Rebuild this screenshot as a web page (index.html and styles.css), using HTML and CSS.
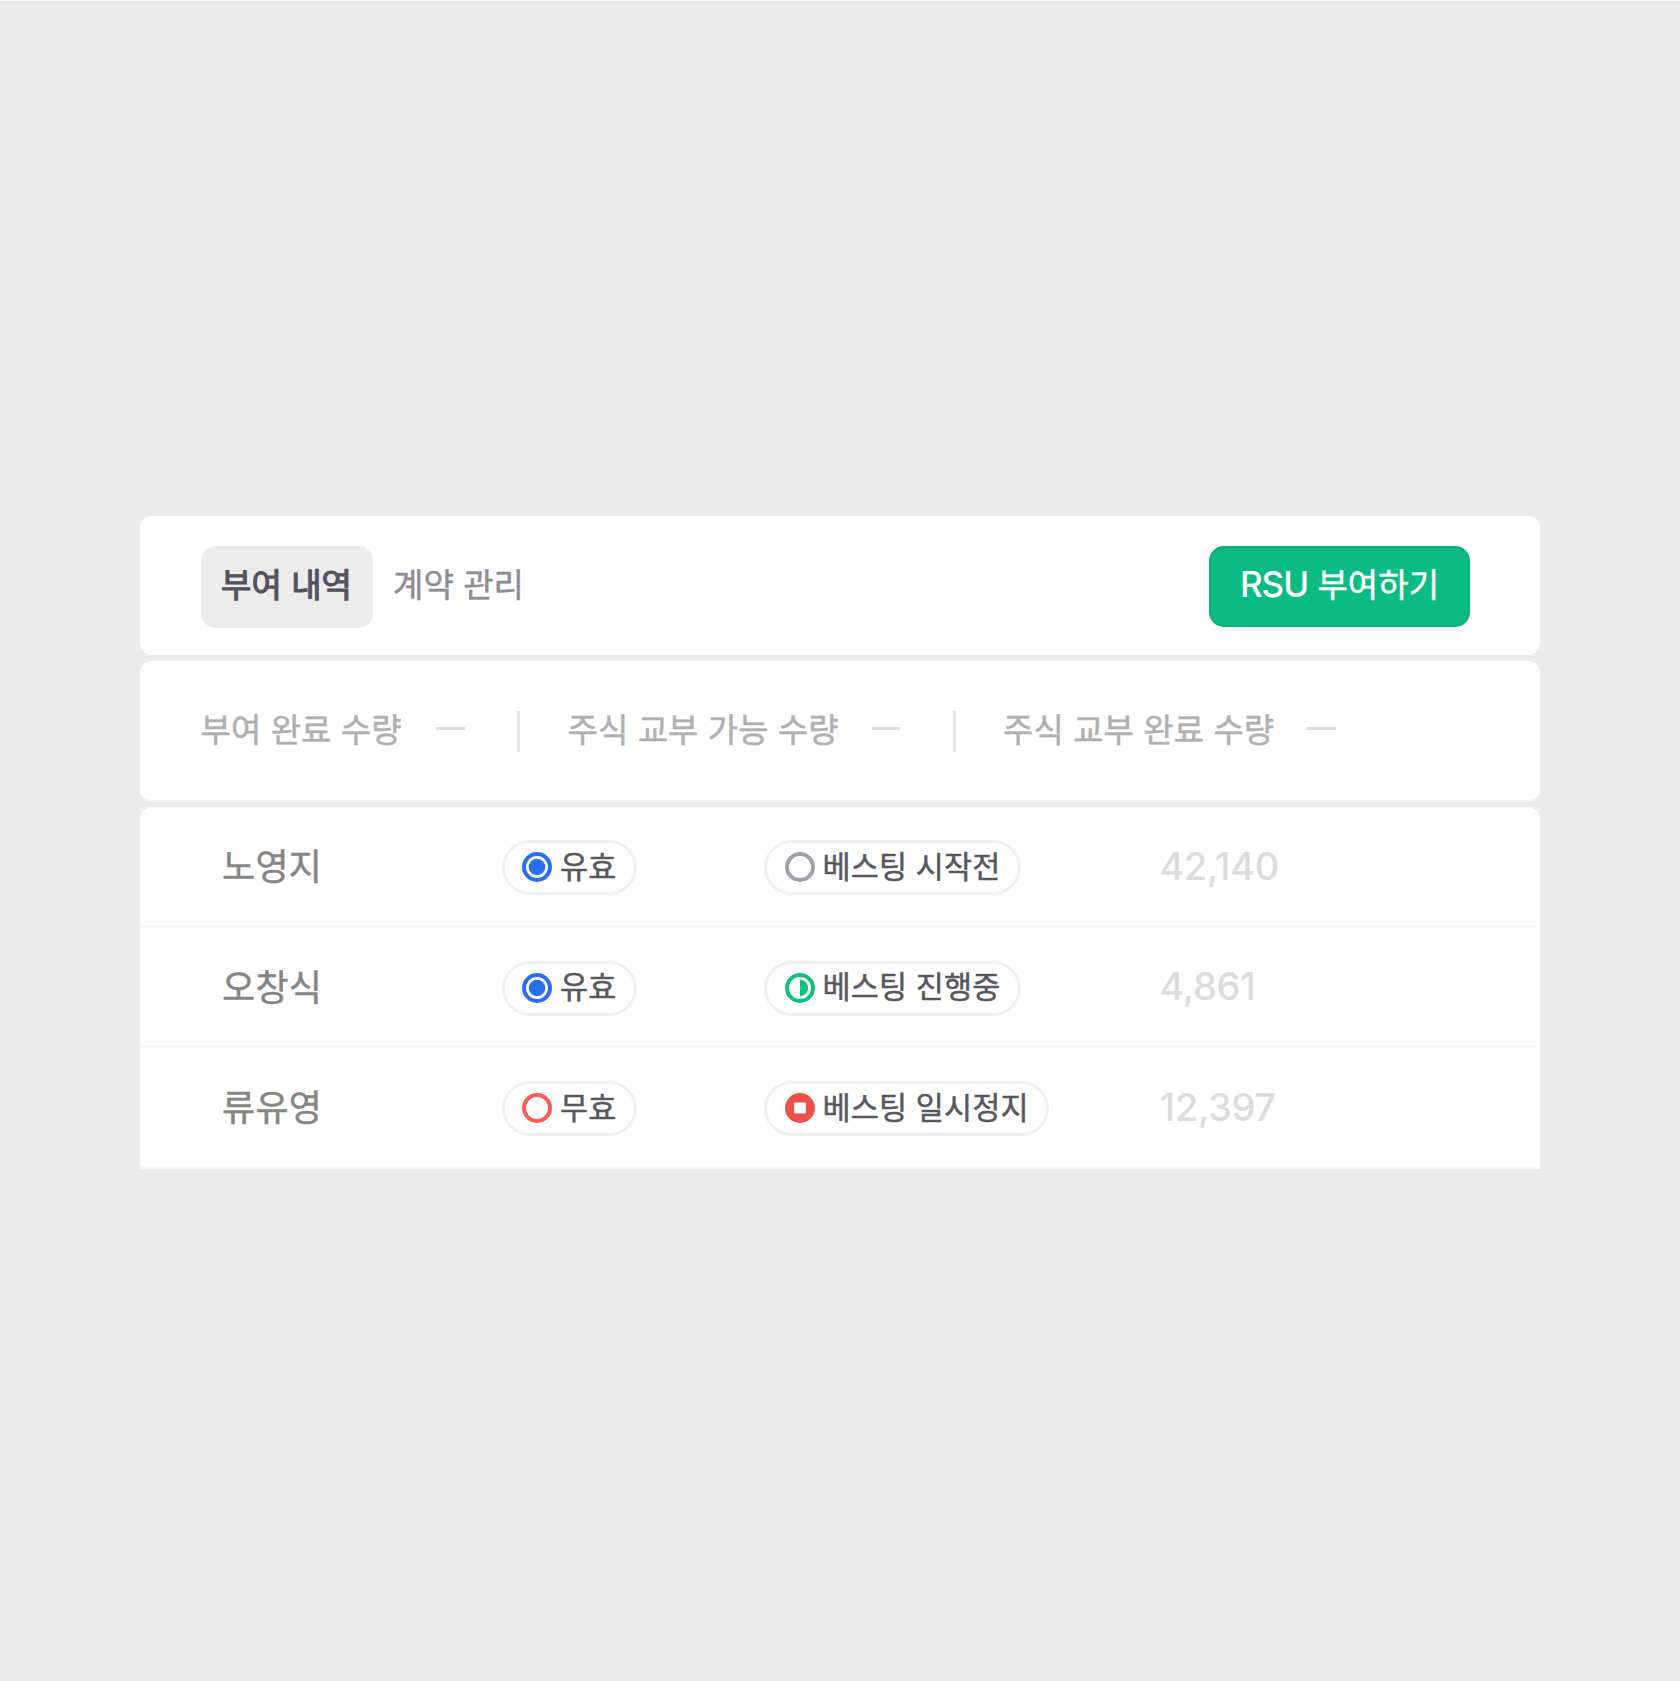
FILE: index.html
```html
<!DOCTYPE html>
<html lang="ko">
<head>
<meta charset="utf-8">
<title>RSU 부여 내역</title>
<link rel="stylesheet" href="styles.css">
</head>
<body>
<main class="board">
  <header class="card toolbar">
    <nav class="tabs">
      <a class="tab tab-active">부여 내역</a>
      <a class="tab">계약 관리</a>
    </nav>
    <button class="grant" type="button"><span class="latin">RSU</span> 부여하기</button>
  </header>

  <section class="card summary">
    <div class="metric metric-short"><span class="metric-label">부여 완료 수량</span><i class="dash"></i></div>
    <i class="divider"></i>
    <div class="metric"><span class="metric-label">주식 교부 가능 수량</span><i class="dash"></i></div>
    <i class="divider"></i>
    <div class="metric"><span class="metric-label">주식 교부 완료 수량</span><i class="dash"></i></div>
  </section>

  <section class="card list">
    <div class="row">
      <span class="name">노영지</span>
      <div class="cell"><span class="pill">
        <svg class="icon" viewBox="0 0 30 30"><circle cx="15" cy="15" r="13" fill="none" stroke="#276ef1" stroke-width="4"/><circle cx="15" cy="15" r="8.3" fill="#276ef1"/></svg>유효</span></div>
      <div class="cell"><span class="pill">
        <svg class="icon" viewBox="0 0 30 30"><circle cx="15" cy="15" r="13" fill="none" stroke="#9fa0a8" stroke-width="4"/></svg>베스팅 시작전</span></div>
      <span class="amount">42,140</span>
    </div>
    <div class="row">
      <span class="name">오창식</span>
      <div class="cell"><span class="pill">
        <svg class="icon" viewBox="0 0 30 30"><circle cx="15" cy="15" r="13" fill="none" stroke="#276ef1" stroke-width="4"/><circle cx="15" cy="15" r="8.3" fill="#276ef1"/></svg>유효</span></div>
      <div class="cell"><span class="pill">
        <svg class="icon" viewBox="0 0 30 30"><circle cx="15" cy="15" r="13" fill="none" stroke="#0fc27b" stroke-width="4"/><path d="M15 6.8a8.2 8.2 0 0 1 0 16.4z" fill="#0fc27b"/></svg>베스팅 진행중</span></div>
      <span class="amount">4,861</span>
    </div>
    <div class="row">
      <span class="name">류유영</span>
      <div class="cell"><span class="pill">
        <svg class="icon" viewBox="0 0 30 30"><circle cx="15" cy="15" r="13" fill="none" stroke="#ff5a57" stroke-width="4"/></svg>무효</span></div>
      <div class="cell"><span class="pill">
        <svg class="icon" viewBox="0 0 30 30"><circle cx="15" cy="15" r="15" fill="#e8504a"/><rect x="9.2" y="9.5" width="11.6" height="11" rx="1" fill="#fff"/></svg>베스팅 일시정지</span></div>
      <span class="amount">12,397</span>
    </div>
  </section>
</main>
</body>
</html>
```
FILE: styles.css
```css
* { box-sizing: border-box; }

body {
  margin: 0;
  min-height: 1681px;
  background: #ebebeb;
  border-top: 1px solid #fcfcfc;
  font-family: Inter, "Noto Sans CJK KR", sans-serif;
  font-size: 33px;
  line-height: 40px;
  letter-spacing: 0.05px;
  white-space: nowrap;
}

.board {
  width: 1400px;
  margin: 0 auto;
  padding-top: 515px;
}

.card {
  background: #fff;
  border-radius: 12px;
}

.toolbar {
  display: flex;
  align-items: flex-start;
  justify-content: space-between;
  height: 139px;
  margin-bottom: 6px;
  padding: 30px 70px 0 61px;
}

.tabs { display: flex; }

.tab {
  height: 82px;
  padding: 19px 19px 0 20px;
  color: #8e8d96;
  -webkit-text-stroke: 0.5px currentColor;
}

.tab-active {
  width: 172px;
  border-radius: 15px;
  background: #ececec;
  color: #545260;
  -webkit-text-stroke: 1.2px currentColor;
}

.grant {
  width: 261px;
  height: 81px;
  padding: 0 0 4px;
  border: 2px solid #0bae7a;
  border-radius: 15px;
  background: #0abb84;
  box-shadow: 0 3px 1px #f5f5f5;
  color: #fff;
  font: inherit;
  letter-spacing: inherit;
  -webkit-text-stroke: 0.5px currentColor;
}

.latin {
  font-size: 35px;
  font-weight: 500;
  letter-spacing: -1px;
  -webkit-text-stroke: 0;
}

.summary {
  display: flex;
  align-items: flex-start;
  height: 141px;
  margin-bottom: 5px;
  padding: 49px 61px 0 60.5px;
  border-bottom: 2px solid #f5f5f5;
}

.metric {
  display: flex;
  justify-content: space-between;
  width: 332.5px;
  color: #b0b0b0;
  -webkit-text-stroke: 0.5px currentColor;
}

.metric-short { width: 264px; }

.dash {
  width: 28.5px;
  height: 3px;
  margin-top: 17px;
  background: #dcdcdc;
}

.divider {
  width: 3px;
  height: 41px;
  margin: 1px 47.5px 0 52.5px;
  background: #e6e6e6;
}

.list {
  height: 361.5px;
  border-radius: 12px 12px 0 0;
}

.row {
  display: grid;
  grid-template-columns: 279.5px 262.5px 395.5px 1fr;
  align-items: start;
  width: 1396px;
  height: 120.5px;
  padding: 33px 0 0 82px;
  border-bottom: 3px solid #f7f7f7;
}

.name {
  margin-top: 7px;
  color: #858585;
  font-size: 36px;
  letter-spacing: 0.3px;
  -webkit-text-stroke: 0.5px currentColor;
}

.pill {
  display: inline-flex;
  align-items: center;
  height: 55px;
  padding: 0 17.5px 2px 17.5px;
  border: 3px solid #eff0f1;
  border-radius: 28px;
  color: #57575f;
  font-size: 30.5px;
  letter-spacing: 0.15px;
  -webkit-text-stroke: 0.5px currentColor;
}

.icon {
  width: 30px;
  height: 30px;
  margin: 1.5px 8px 0 0;
}

.amount {
  margin-top: 5.5px;
  color: #dcdcdc;
  font-size: 38px;
  font-weight: 500;
  letter-spacing: -0.4px;
}
```
